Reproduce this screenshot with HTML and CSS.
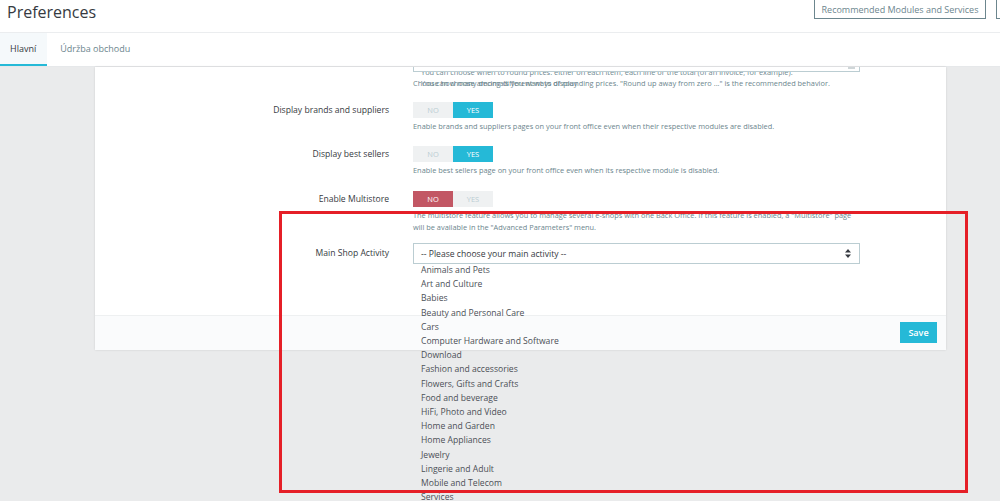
FILE: index.html
```html
<!DOCTYPE html>
<html lang="en">
<head>
    <meta charset="UTF-8">
    <title>Preferences</title>
    <link rel="stylesheet" href="styles.css">
</head>
<body>
    <div class="page-head">
        <h1 class="page-title">Preferences</h1>
        <div class="toolbar">
            <a href="#" class="btn-outline">Recommended Modules and Services</a>
            <a href="#" class="btn-outline">Help</a>
        </div>
    </div>
    <div class="tabs">
        <a href="#" class="tab active">Hlavní</a>
        <a href="#" class="tab">Údržba obchodu</a>
    </div>

    <div class="content">
        <div class="panel">
            <div class="panel-body">
                <div class="form-row">
                    <div></div>
                    <div class="control">
                        <div class="select-stub"><span class="stub-arrow"></span></div>
                        <div class="clipped-help"><span>You can choose when to round prices: either on each item, each line or the total (of an invoice, for example).</span></div>
                        <div class="help stacked">
                            <span>Choose how many decimals you want to display</span>
                            <span class="indent">You can choose among different ways of rounding prices. "Round up away from zero ..." is the recommended behavior.</span>
                        </div>
                    </div>
                </div>

                <div class="form-row spaced first">
                    <label class="form-label">Display brands and suppliers</label>
                    <div class="control">
                        <div class="switch">
                            <span>NO</span>
                            <span class="on-yes">YES</span>
                        </div>
                        <div class="help">Enable brands and suppliers pages on your front office even when their respective modules are disabled.</div>
                    </div>
                </div>

                <div class="form-row spaced">
                    <label class="form-label">Display best sellers</label>
                    <div class="control">
                        <div class="switch">
                            <span>NO</span>
                            <span class="on-yes">YES</span>
                        </div>
                        <div class="help">Enable best sellers page on your front office even when its respective module is disabled.</div>
                    </div>
                </div>

                <div class="form-row spaced last">
                    <label class="form-label">Enable Multistore</label>
                    <div class="control">
                        <div class="switch">
                            <span class="on-no">NO</span>
                            <span>YES</span>
                        </div>
                        <div class="help">The multistore feature allows you to manage several e-shops with one Back Office. If this feature is enabled, a "Multistore" page will be available in the "Advanced Parameters" menu.</div>
                    </div>
                </div>

                <div class="form-row select-row">
                    <label class="form-label select-label">Main Shop Activity</label>
                    <div class="control">
                        <div class="select-wrap">
                            <div class="select">
                                <span>-- Please choose your main activity --</span>
                                <svg class="select-arrows" width="6" height="9" viewBox="0 0 6 9">
                                    <path d="M0 3.5 L3 0 L6 3.5 Z M0 5.5 L3 9 L6 5.5 Z" fill="#363a41"/>
                                </svg>
                            </div>
                            <ul class="options">
                                <li>Animals and Pets</li>
                                <li>Art and Culture</li>
                                <li>Babies</li>
                                <li>Beauty and Personal Care</li>
                                <li>Cars</li>
                                <li>Computer Hardware and Software</li>
                                <li>Download</li>
                                <li>Fashion and accessories</li>
                                <li>Flowers, Gifts and Crafts</li>
                                <li>Food and beverage</li>
                                <li>HiFi, Photo and Video</li>
                                <li>Home and Garden</li>
                                <li>Home Appliances</li>
                                <li>Jewelry</li>
                                <li>Lingerie and Adult</li>
                                <li>Mobile and Telecom</li>
                                <li>Services</li>
                            </ul>
                        </div>
                    </div>
                </div>
            </div>
            <div class="panel-footer">
                <button class="btn-save">Save</button>
            </div>
        </div>

        <div class="annotation"></div>
    </div>
</body>
</html>
```

FILE: styles.css
```css
body {
    font-family: "Open Sans", "Noto Sans", Arial, sans-serif;
    margin: 0;
    padding: 0;
    background-color: #eaebec;
    color: #363a41;
    height: 501px;
    overflow: hidden;
}
.page-head {
    height: 33px;
    background-color: #ffffff;
    border-bottom: 1px solid #ebedef;
    box-sizing: border-box;
    display: flex;
    justify-content: space-between;
    align-items: flex-start;
    overflow: hidden;
}
.page-title {
    margin: 0;
    padding-left: 7px;
    font-size: 16px;
    font-weight: 400;
    line-height: 24px;
    color: #363a41;
}
.toolbar {
    display: flex;
    gap: 10px;
    margin-right: -36px;
    margin-top: -4px;
}
.btn-outline {
    display: block;
    height: 23px;
    line-height: 25px;
    padding: 0 8px;
    border: 1px solid #6c868e;
    box-sizing: border-box;
    font-size: 9px;
    color: #6c868e;
    text-decoration: none;
    white-space: nowrap;
}
.toolbar .btn-outline:first-child {
    width: 172px;
    text-align: center;
    padding: 0;
}
.toolbar .btn-outline:last-child {
    width: 40px;
}
.tabs {
    height: 34px;
    background-color: #ffffff;
    border-bottom: 1px solid #e6e8ea;
    box-sizing: border-box;
    display: flex;
    gap: 3px;
}
.tab {
    display: block;
    padding: 0 11px 0 10px;
    line-height: 31px;
    font-size: 9px;
    color: #6c868e;
    text-decoration: none;
    border-bottom: 2px solid transparent;
}
.tab.active {
    color: #363a41;
    background-color: #f5f9fb;
    border-bottom-color: #25b9d7;
}

.content {
    position: relative;
    height: 434px;
}
.panel {
    margin-left: 95px;
    width: 851px;
    background-color: #ffffff;
    box-shadow: 0 0 2px rgba(0, 0, 0, 0.12);
}
.panel-body {
    padding-bottom: 51px;
}
.form-row {
    display: grid;
    grid-template-columns: 318px 447px;
    align-items: start;
}
.form-row.spaced {
    margin-top: 14px;
}
.form-row.spaced.first {
    margin-top: 13px;
}
.form-row.spaced.last {
    margin-top: 15px;
}
.form-row.select-row {
    margin-top: 10px;
}
.form-label {
    text-align: right;
    padding-right: 24px;
    font-size: 8.6px;
    line-height: 16px;
    color: #363a41;
}
.form-label.select-label {
    line-height: 21px;
}
.control {
    min-width: 0;
}
.select-stub {
    height: 4px;
    border: 1px solid #bbcdd2;
    border-top: none;
    position: relative;
}
.stub-arrow {
    position: absolute;
    right: 4px;
    top: 0;
    width: 7px;
    height: 2px;
    background-color: #cfd6d8;
}
.clipped-help {
    height: 5px;
    overflow: hidden;
    font-size: 7.4px;
    line-height: 12px;
    color: #6c868e;
    padding-left: 8px;
    white-space: nowrap;
}
.clipped-help span {
    display: block;
    margin-top: -6px;
}
.help {
    font-size: 7.4px;
    line-height: 12px;
    color: #6c868e;
    margin-top: 2px;
}
.help.stacked {
    display: grid;
    margin-top: 0;
    white-space: nowrap;
}
.help.stacked span {
    grid-area: 1 / 1;
}
.help .indent {
    padding-left: 8px;
}
.switch {
    display: flex;
    width: 80px;
    height: 16px;
    background-color: #eff1f2;
}
.switch span {
    width: 40px;
    text-align: center;
    font-size: 7.5px;
    line-height: 16px;
    color: #bbcdd2;
}
.switch .on-yes {
    background-color: #25b9d7;
    color: #ffffff;
}
.switch .on-no {
    background-color: #c25764;
    color: #ffffff;
}
.select-wrap {
    position: relative;
}
.select {
    height: 21px;
    border: 1px solid #bbcdd2;
    box-sizing: border-box;
    display: flex;
    align-items: center;
    justify-content: space-between;
    padding: 0 8px 0 7px;
    font-size: 8.6px;
    color: #363a41;
    background-color: #ffffff;
}
.options {
    position: absolute;
    top: 100%;
    left: 0;
    margin: -1px 0 0 0;
    padding: 0 0 0 8px;
    list-style: none;
    font-size: 8.6px;
    line-height: 14.2px;
    color: #4a4f56;
    z-index: 2;
    white-space: nowrap;
}
.panel-footer {
    background-color: #fafbfc;
    border-top: 1px solid #eef0f1;
    height: 35px;
    box-sizing: border-box;
    display: flex;
    justify-content: flex-end;
    align-items: flex-start;
    padding: 6px 9px 0 0;
}
.btn-save {
    background-color: #25b9d7;
    color: #ffffff;
    border: none;
    width: 37px;
    height: 21px;
    padding: 0;
    font-family: "Open Sans", Arial, sans-serif;
    font-size: 9px;
    font-weight: 600;
    cursor: pointer;
}
.annotation {
    position: absolute;
    left: 279px;
    top: 144px;
    width: 689px;
    height: 282px;
    border: 3px solid #e51f27;
    box-sizing: border-box;
    z-index: 3;
}
```
